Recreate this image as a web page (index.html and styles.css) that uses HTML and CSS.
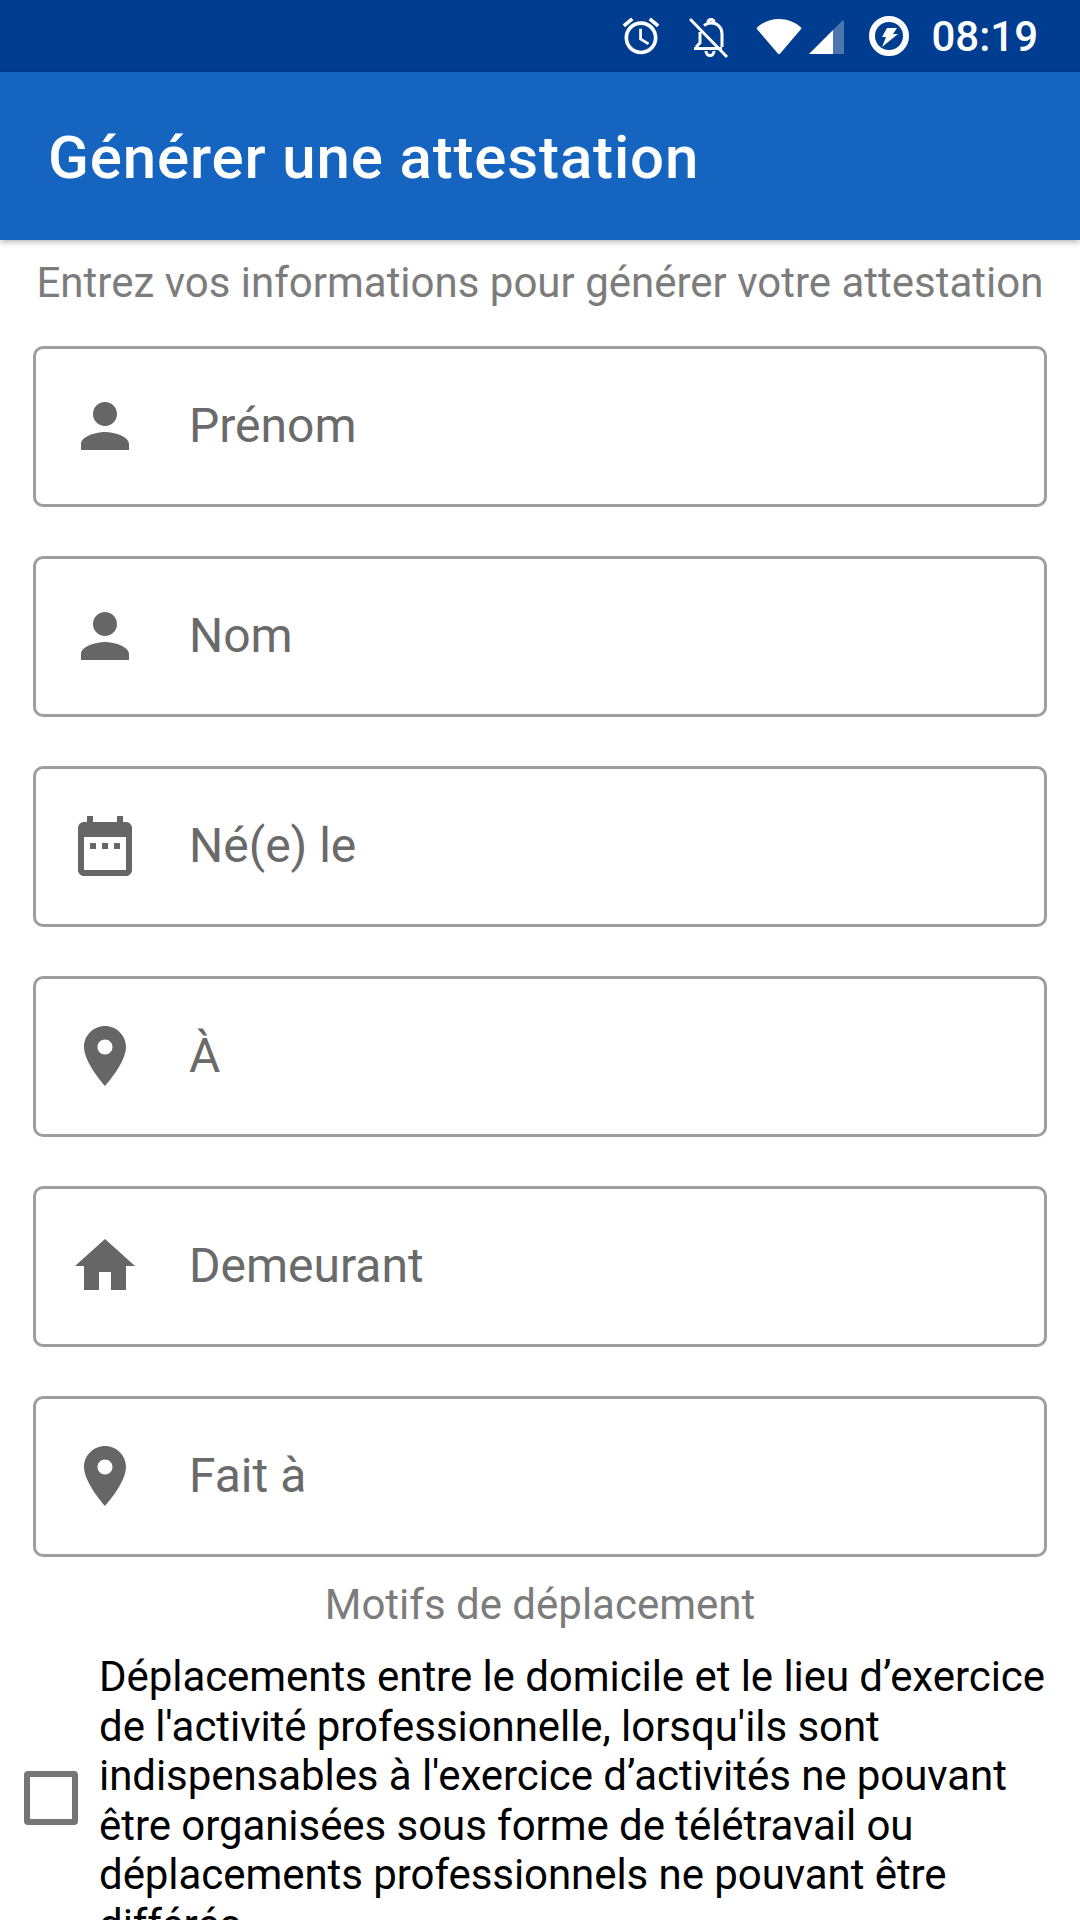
FILE: index.html
```html
<!DOCTYPE html>
<html lang="fr">
<head>
<meta charset="UTF-8">
<meta name="viewport" content="width=device-width, initial-scale=1.0">
<title>Générer une attestation</title>
<link rel="stylesheet" href="styles.css">
</head>
<body>
<!-- Android status bar -->
<div class="status-bar">
  <svg class="status-icon" viewBox="0 0 24 24"><path d="M22 5.72l-4.6-3.86-1.29 1.53 4.6 3.86L22 5.72zM7.88 3.39L6.6 1.86 2 5.71l1.29 1.53 4.59-3.85zM12.5 8H11v6l4.75 2.85.75-1.23-4-2.37V8zM12 4c-4.97 0-9 4.03-9 9s4.03 9 9 9 9-4.03 9-9-4.03-9-9-9zm0 16c-3.87 0-7-3.13-7-7s3.13-7 7-7 7 3.13 7 7-3.13 7-7 7z"/></svg>
  <svg class="bell" viewBox="0 0 40 42"><path class="bell-line" d="M33 30V17c0-7-5-11-11-11-3 0-5 1-7 2.500M19 5.500c0-4 6-4 6 0M11 15v11l-4 4M5 31.500h28M17 34c0 6 8 6 8 0M1 2l37 38"/></svg>
  <svg class="wifi" viewBox="0 0 46 37"><path d="M1 9.500C7 4 14.500 1 23 1s16 3 22 8.500c.5.500.5 1 .1 1.500L24.200 35.600c-.7.800-1.700.800-2.400 0L.9 11c-.4-.5-.4-1 .1-1.500z"/></svg>
  <svg class="signal" viewBox="0 0 35 34"><path d="M0 34L24 10v24z"/><path class="signal-empty" d="M24 10L33 1c1-1 2-.5 2 .5V34H24z"/></svg>
  <svg class="saver" viewBox="0 0 40 40"><circle cx="20" cy="20" r="17"/><path class="bolt" d="M18 12h10l-4 6h5L13 31l4-10h-4z"/></svg>
  <span class="clock">08:19</span>
</div>

<div class="app-bar">
  <h1>Générer une attestation</h1>
</div>

<main class="content">
  <p class="hint">Entrez vos informations pour générer votre attestation</p>

  <div class="field">
    <svg class="field-icon" viewBox="0 0 24 24"><path d="M12 12c2.210 0 4-1.790 4-4s-1.790-4-4-4-4 1.790-4 4 1.790 4 4 4zm0 2c-2.670 0-8 1.340-8 4v2h16v-2c0-2.660-5.330-4-8-4z"/></svg>
    <span>Prénom</span>
  </div>
  <div class="field">
    <svg class="field-icon" viewBox="0 0 24 24"><path d="M12 12c2.210 0 4-1.790 4-4s-1.790-4-4-4-4 1.790-4 4 1.790 4 4 4zm0 2c-2.670 0-8 1.340-8 4v2h16v-2c0-2.660-5.330-4-8-4z"/></svg>
    <span>Nom</span>
  </div>
  <div class="field">
    <svg class="field-icon" viewBox="0 0 24 24"><path d="M9 11H7v2h2v-2zm4 0h-2v2h2v-2zm4 0h-2v2h2v-2zm2-7h-1V2h-2v2H8V2H6v2H5c-1.110 0-1.990.9-1.990 2L3 20c0 1.100.89 2 2 2h14c1.100 0 2-.9 2-2V6c0-1.100-.9-2-2-2zm0 16H5V9h14v11z"/></svg>
    <span>Né(e) le</span>
  </div>
  <div class="field">
    <svg class="field-icon" viewBox="0 0 24 24"><path d="M12 2C8.130 2 5 5.130 5 9c0 5.250 7 13 7 13s7-7.750 7-13c0-3.870-3.130-7-7-7zm0 9.500c-1.380 0-2.500-1.120-2.500-2.500s1.120-2.500 2.500-2.500 2.500 1.120 2.500 2.500-1.120 2.500-2.500 2.500z"/></svg>
    <span>À</span>
  </div>
  <div class="field">
    <svg class="field-icon" viewBox="0 0 24 24"><path d="M10 20v-6h4v6h5v-8h3L12 3 2 12h3v8z"/></svg>
    <span>Demeurant</span>
  </div>
  <div class="field">
    <svg class="field-icon" viewBox="0 0 24 24"><path d="M12 2C8.130 2 5 5.130 5 9c0 5.250 7 13 7 13s7-7.750 7-13c0-3.870-3.130-7-7-7zm0 9.500c-1.380 0-2.500-1.120-2.500-2.500s1.120-2.500 2.500-2.500 2.500 1.120 2.500 2.500-1.120 2.500-2.500 2.500z"/></svg>
    <span>Fait à</span>
  </div>

  <p class="section-title">Motifs de déplacement</p>

  <div class="reason">
    <div class="checkbox"></div>
    <p>Déplacements entre le domicile et le lieu d’exercice<br>de l'activité professionnelle, lorsqu'ils sont<br>indispensables à l'exercice d’activités ne pouvant<br>être organisées sous forme de télétravail ou<br>déplacements professionnels ne pouvant être<br>différés</p>
  </div>
</main>
</body>
</html>
```

FILE: styles.css
```css
* {
  box-sizing: border-box;
}

html, body {
  margin: 0;
  height: 1920px;
  overflow: hidden;
  background-color: #fff;
  font-family: Roboto, "Liberation Sans", sans-serif;
}

/* Status bar */
.status-bar {
  display: flex;
  align-items: center;
  justify-content: flex-end;
  height: 72px;
  padding-right: 42px;
  background-color: #003c8f;
  color: #fff;
  fill: #fff;
}

.status-icon {
  width: 44px;
  height: 44px;
  margin-right: 26px;
}

.bell {
  width: 40px;
  height: 42px;
  margin-right: 27px;
  margin-top: 3px;
}

.bell-line {
  fill: none;
  stroke: #fff;
  stroke-width: 3px;
}

.wifi {
  width: 46px;
  height: 37px;
  margin-right: 7px;
}

.signal {
  width: 35px;
  height: 34px;
  margin-top: 2px;
  margin-right: 25px;
}

.signal-empty {
  opacity: 0.3;
}

.saver {
  width: 40px;
  height: 40px;
  margin-right: 22px;
}

.saver circle {
  fill: none;
  stroke: #fff;
  stroke-width: 6px;
}

.clock {
  font-size: 42px;
  font-weight: 500;
}

/* App bar */
.app-bar {
  position: relative;
  display: flex;
  align-items: center;
  height: 168px;
  padding-left: 48px;
  background-color: #1565c0;
  box-shadow: 0 2px 6px rgba(0, 0, 0, 0.3);
}

.app-bar h1 {
  margin: 2px 0 0;
  font-size: 60px;
  font-weight: 500;
  letter-spacing: 0.85px;
  color: #fff;
}

/* Form */
.content {
  display: flex;
  flex-direction: column;
  padding: 18px 33px 0;
}

.hint {
  margin: 0 0 38px;
  font-size: 42px;
  line-height: 50px;
  text-align: center;
  white-space: nowrap;
  color: #7c7c7c;
}

.field {
  display: flex;
  align-items: center;
  height: 161px;
  margin-bottom: 49px;
  padding-left: 33px;
  border: 3px solid #9e9e9e;
  border-radius: 10px;
  font-size: 48px;
  color: #6a6a6a;
}

.field span {
  margin-top: -2px;
}

.field-icon {
  flex: none;
  width: 72px;
  height: 72px;
  margin-top: -2px;
  margin-right: 48px;
  fill: #666;
}

.section-title {
  margin: -26px 0 0;
  font-size: 42px;
  line-height: 50px;
  text-align: center;
  color: #7c7c7c;
}

.reason {
  display: flex;
  align-items: center;
  margin: 22px 0 0 -9px;
}

.checkbox {
  flex: none;
  width: 54px;
  height: 54px;
  margin-right: 21px;
  margin-bottom: 5px;
  border: 6px solid #757575;
  border-radius: 4px;
}

.reason p {
  margin: 0;
  font-size: 42px;
  line-height: 49.500px;
  letter-spacing: -0.06px;
  white-space: nowrap;
  color: #000;
}
```
